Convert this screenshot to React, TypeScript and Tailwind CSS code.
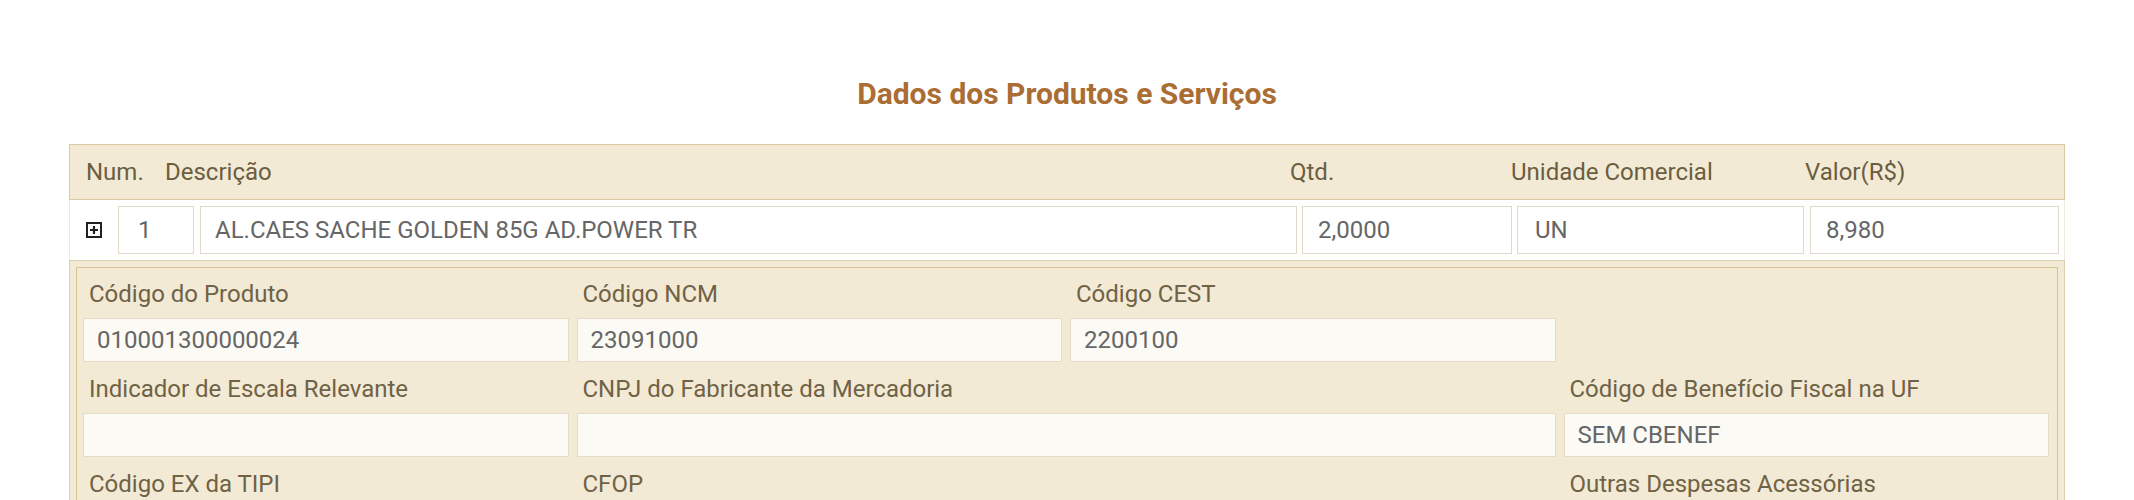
import React from 'react'

type Field = { label: string; value?: string; span?: number } | null

const detailRows: Field[][] = [
  [
    { label: 'Código do Produto', value: '010001300000024' },
    { label: 'Código NCM', value: '23091000' },
    { label: 'Código CEST', value: '2200100' },
    null,
  ],
  [
    { label: 'Indicador de Escala Relevante', value: '' },
    { label: 'CNPJ do Fabricante da Mercadoria', value: '', span: 2 },
    { label: 'Código de Benefício Fiscal na UF', value: 'SEM CBENEF' },
  ],
  [
    { label: 'Código EX da TIPI', value: '' },
    { label: 'CFOP', value: '' },
    null,
    { label: 'Outras Despesas Acessórias', value: '' },
  ],
]

function ExpandIcon() {
  return (
    <svg width="16" height="16" viewBox="0 0 16 16">
      <rect x="1" y="1" width="14" height="14" fill="#fff" stroke="#222" strokeWidth="2" />
      <path d="M4 8h8M8 4v8" stroke="#222" strokeWidth="2.2" />
    </svg>
  )
}

function Cell({ value, className = '' }: { value: string; className?: string }) {
  return (
    <div className={`h-[48px] border border-[#e0d9c8] bg-white flex items-center text-[24px] text-[#666] ${className}`}>
      {value}
    </div>
  )
}

function DetailField({ field }: { field: Field }) {
  if (!field) return <div />
  return (
    <div className={`flex flex-col ${field.span === 2 ? 'col-span-2' : ''}`}>
      <div className="h-[28px] leading-[28px] pl-[6px] text-[24px] text-[#6f6245] whitespace-nowrap">{field.label}</div>
      <div className="mt-[10px] h-[44px] border border-[#e6dcc5] bg-[#fbfaf5] px-[13px] flex items-center text-[24px] text-[#666]">
        {field.value}
      </div>
    </div>
  )
}

export default function App() {
  return (
    <div className="min-h-screen bg-white font-['Roboto','Liberation_Sans',sans-serif] pt-[76px]">
      <h2 className="text-center text-[30px] leading-[36px] font-bold text-[#aa6d33]">Dados dos Produtos e Serviços</h2>

      <div className="mx-[69px] mt-[32px]">
        {/* header */}
        <div className="h-[56px] border border-[#dac9a2] bg-[#f3ead6] flex items-center text-[24px] text-[#6b5e40]">
          <div className="w-[95px] pl-[16px]">Num.</div>
          <div className="w-[1125px]">Descrição</div>
          <div className="w-[221px]">Qtd.</div>
          <div className="w-[294px]">Unidade Comercial</div>
          <div className="flex-1">Valor(R$)</div>
        </div>

        {/* item row */}
        <div className="h-[60px] border-x border-[#f0ebe0] bg-white flex items-center pr-[5px]">
          <div className="w-[48px] pl-[16px] flex items-center">
            <ExpandIcon />
          </div>
          <Cell value="1" className="w-[76px] pl-[19px]" />
          <Cell value="AL.CAES SACHE GOLDEN 85G AD.POWER TR" className="flex-1 ml-[6px] px-[14px] whitespace-nowrap" />
          <Cell value="2,0000" className="w-[210px] ml-[5px] px-[15px]" />
          <Cell value="UN" className="w-[287px] ml-[5px] px-[17px]" />
          <Cell value="8,980" className="w-[249px] ml-[6px] px-[15px]" />
        </div>

        {/* item details */}
        <div className="border border-[#ddd0b0] bg-[#f3ead6] p-[6px]">
          <div className="border border-[#d8c493] bg-[#f3ead6] pl-[6px] pr-[8px] pt-[12px] pb-[20px]">
            <div className="grid grid-cols-4 gap-x-[8px] gap-y-[13px]">
              {detailRows.map((row, r) =>
                row.map((field, c) => <DetailField key={`${r}-${c}`} field={field} />)
              )}
            </div>
          </div>
        </div>
      </div>
    </div>
  )
}
